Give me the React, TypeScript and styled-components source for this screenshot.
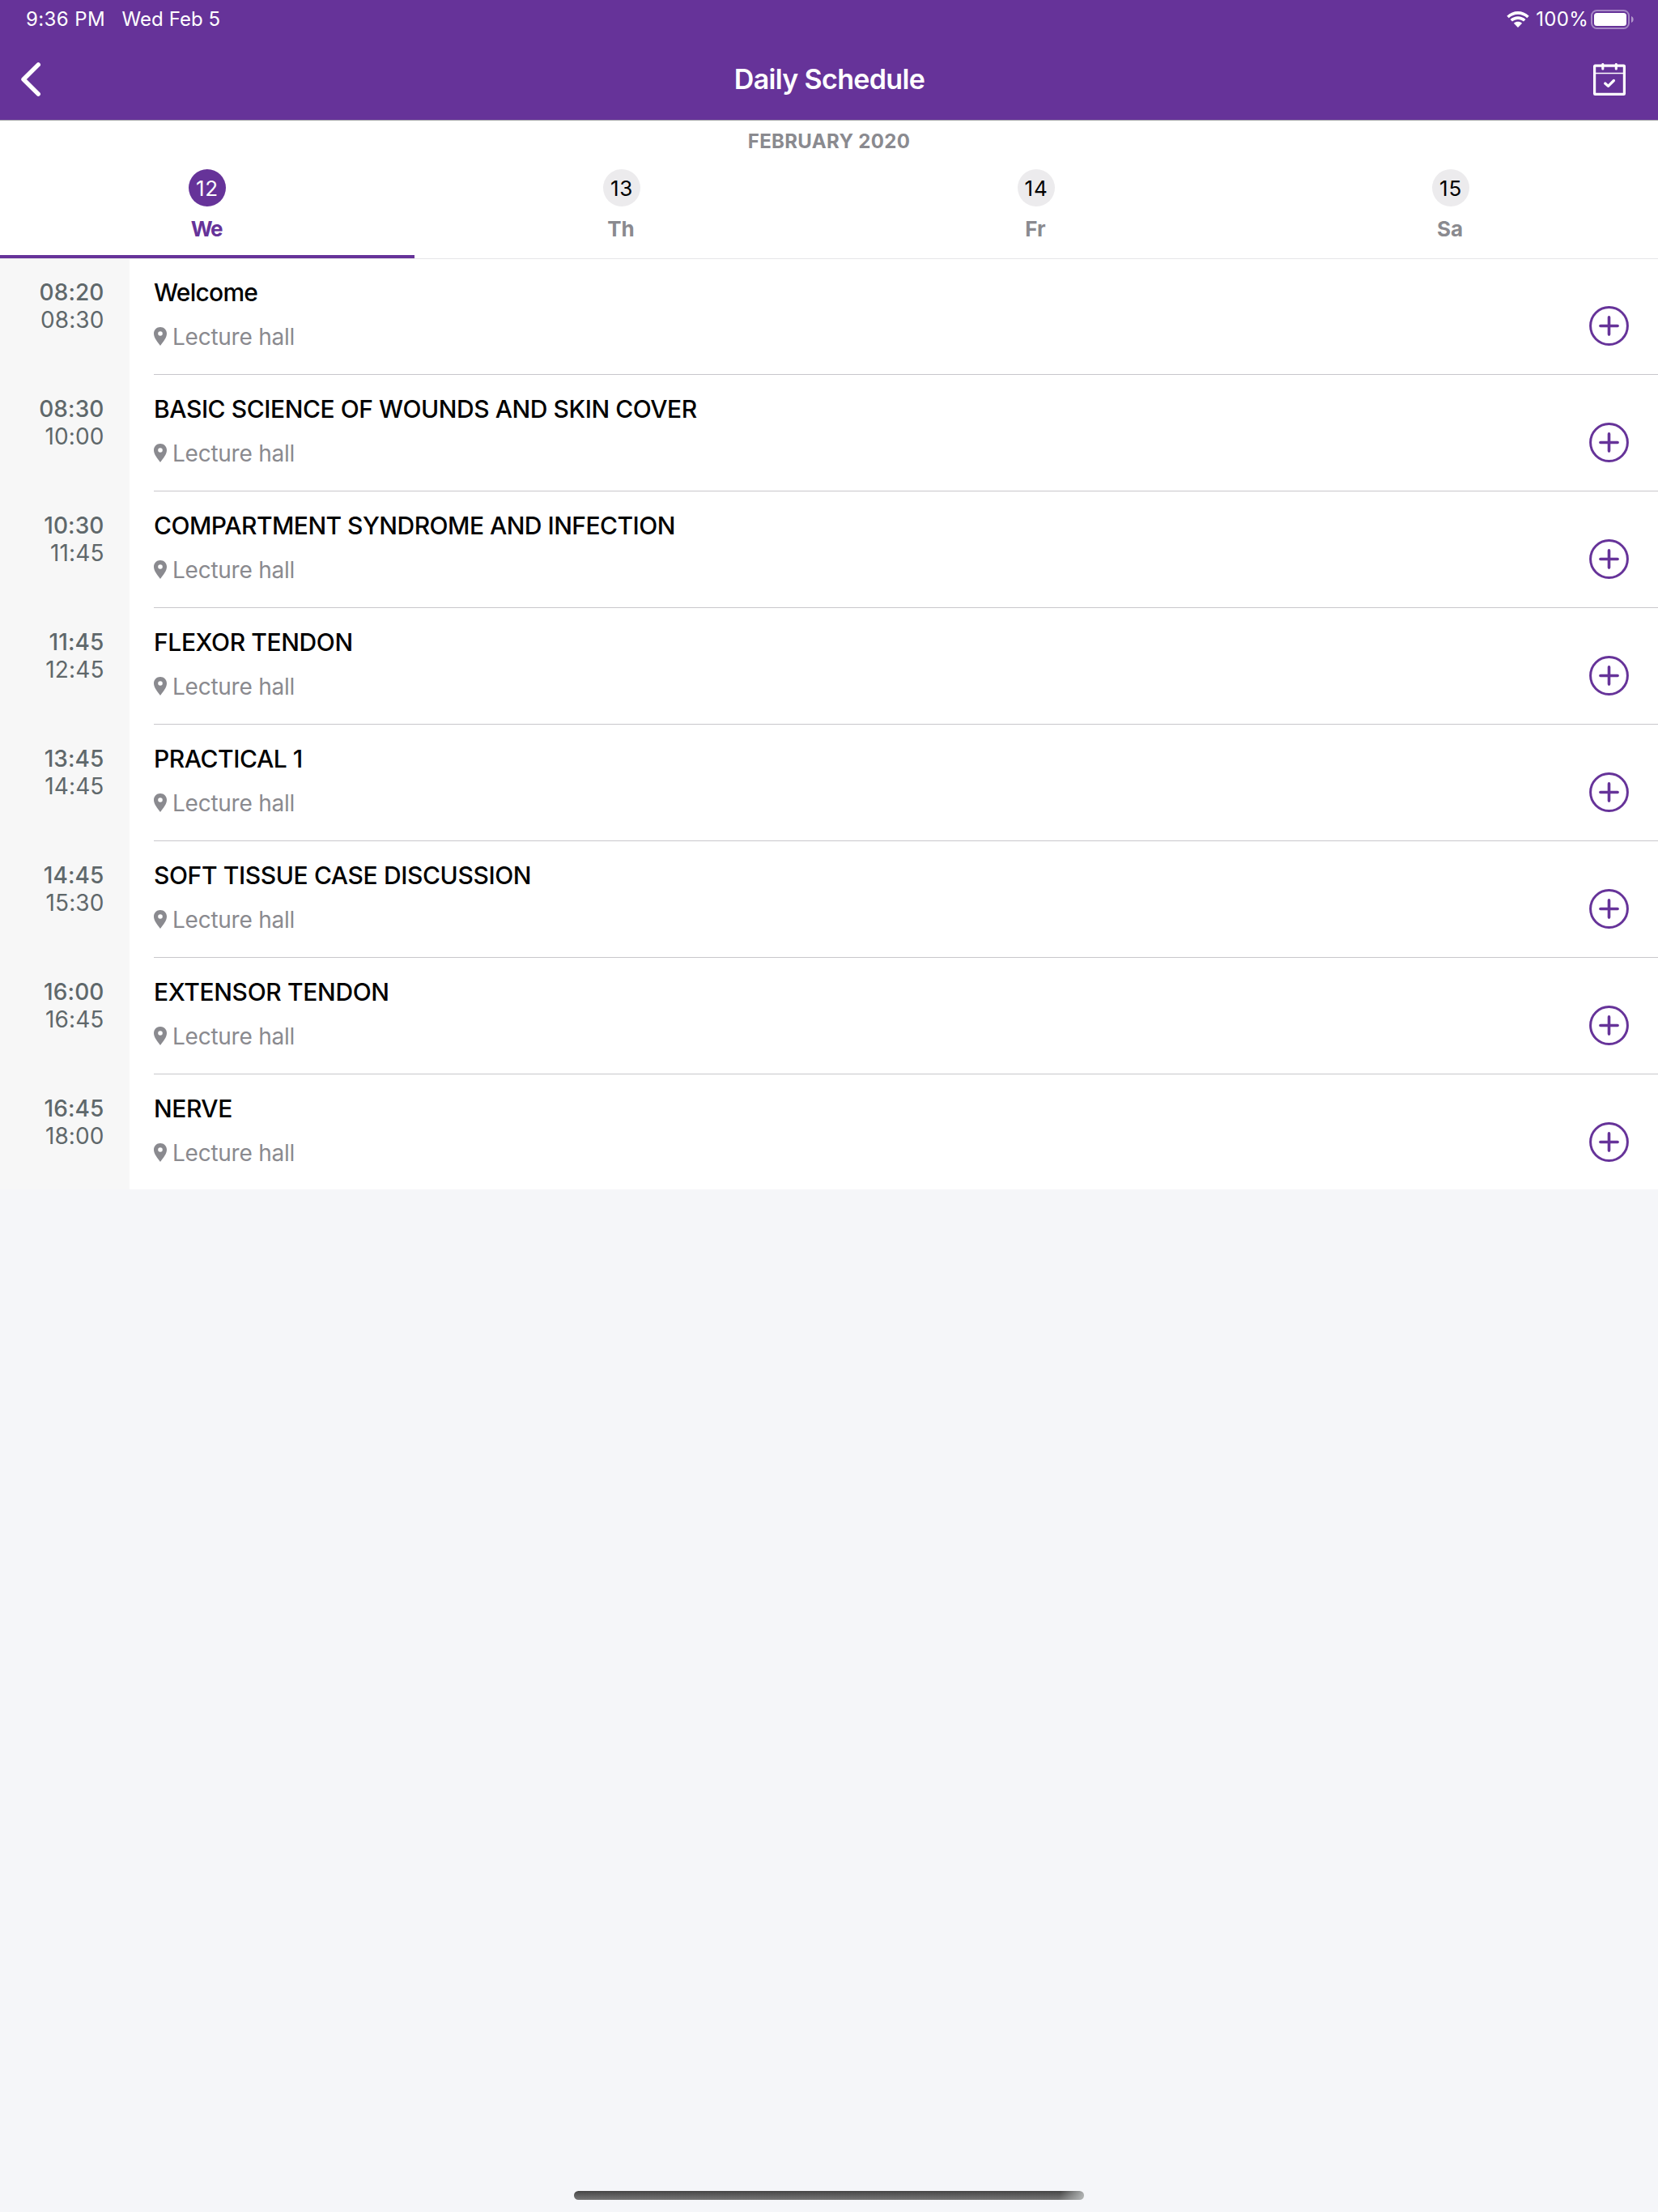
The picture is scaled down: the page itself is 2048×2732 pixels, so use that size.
import React, { useState } from "react";
import styled, { createGlobalStyle } from "styled-components";

const purple = "#663399";
const grey = "#8a8a8f";
const backdrop = "#f5f6f9";

const GlobalStyle = createGlobalStyle`
  *, *::before, *::after { box-sizing: border-box; }
  body { margin: 0; background: ${backdrop}; }
  button { border: 0; padding: 0; background: none; font: inherit; color: inherit; cursor: pointer; }
  svg { display: block; flex: none; }
`;

const Page = styled.div`
  display: flex;
  flex-direction: column;
  width: 2048px;
  height: 2732px;
  background: ${backdrop};
  font-family: Inter, "Liberation Sans", sans-serif;
`;

const TopBar = styled.header`
  flex: none;
  height: 149px;
  background: ${purple};
  border-bottom: 1px solid #a7a7aa;
  color: #fff;
`;

const StatusBar = styled.div`
  display: flex;
  justify-content: space-between;
  height: 48px;
  padding: 0 30px 0 32px;
  font-size: 24px;
  line-height: 48px;
`;

const StatusGroup = styled.div<{ $gap: number }>`
  display: flex;
  gap: ${(p) => p.$gap}px;
`;

const StatusText = styled.span<{ $tracking?: number }>`
  font-weight: 400;
  letter-spacing: ${(p) => p.$tracking ?? 0}px;
`;

const StatusIcon = styled.span<{ $top: number }>`
  padding-top: ${(p) => p.$top}px;
`;

const NavBar = styled.nav`
  display: grid;
  grid-template-columns: 1fr auto 1fr;
  align-items: center;
  height: 100px;
  padding: 0 40px 0 25px;
`;

const NavTitle = styled.h1`
  margin: 0 0 0 16px;
  font-size: 34px;
  font-weight: 600;
  line-height: 42px;
  letter-spacing: -0.65px;
`;

const BackButton = styled.button`
  justify-self: start;
`;

const CalendarButton = styled.button`
  justify-self: end;
`;

const DatePicker = styled.section`
  flex: none;
  height: 171px;
  background: #fff;
  border-bottom: 1px solid #e6e6e8;
`;

const Month = styled.h2`
  height: 50px;
  margin: 0;
  color: ${grey};
  font-size: 24px;
  font-weight: 700;
  line-height: 52px;
  letter-spacing: 0.33px;
  text-align: center;
`;

const Tabs = styled.div`
  display: grid;
  grid-template-columns: repeat(4, 1fr);
`;

const DayTab = styled.button<{ $active: boolean }>`
  display: flex;
  flex-direction: column;
  align-items: center;
  gap: 11px;
  height: 120px;
  padding-top: 10px;
  border-bottom: 4px solid ${(p) => (p.$active ? purple : "transparent")};
  color: ${(p) => (p.$active ? purple : grey)};
  font-size: 26px;
`;

const DayNumber = styled.span<{ $active: boolean }>`
  width: 46px;
  height: 46px;
  border-radius: 50%;
  background: ${(p) => (p.$active ? purple : "#ecebed")};
  color: ${(p) => (p.$active ? "#fff" : "#000")};
  line-height: 48px;
  letter-spacing: 0.8px;
  text-align: center;
`;

const DayName = styled.span<{ $tracking: number }>`
  margin-right: 2px;
  font-weight: 700;
  line-height: 33px;
  letter-spacing: ${(p) => p.$tracking}px;
`;

const List = styled.ul`
  flex: none;
  height: 1149px;
  margin: 0;
  padding: 0;
  overflow: hidden;
  list-style: none;
  background: #fff;
`;

const Row = styled.li`
  display: flex;
  height: 144px;

  &:first-child {
    height: 142px;
  }
`;

const Times = styled.div`
  width: 160px;
  padding: 26px 31.5px 0 0;
  background: #f7f7f7;
  color: #5f686b;
  font-size: 28px;
  line-height: 34px;
  letter-spacing: 0.1px;
  text-align: right;

  ${Row}:first-child & {
    padding-top: 24px;
  }
`;

const Time = styled.div<{ $start?: boolean }>`
  font-weight: ${(p) => (p.$start ? 500 : 400)};
`;

const Body = styled.div`
  display: flex;
  flex: 1;
  justify-content: space-between;
  margin-left: 30px;
  padding: 24px 36px 0 0;
  border-top: 1px solid #c8c7cb;

  ${Row}:first-child & {
    padding-top: 23px;
    border-top: 0;
  }
`;

const Title = styled.h3<{ $tracking: number }>`
  margin: 0 0 20px;
  color: #000;
  font-size: 30px;
  font-weight: 500;
  line-height: 36px;
  letter-spacing: ${(p) => p.$tracking}px;
`;

const Place = styled.div`
  display: flex;
  align-items: center;
  gap: 7px;
  color: ${grey};
  font-size: 28px;
  line-height: 34px;
  letter-spacing: -0.25px;

  svg {
    margin-bottom: 2px;
  }
`;

const AddButton = styled.button`
  align-self: flex-start;
  margin-top: 35px;
  color: ${purple};
`;

const HomeIndicator = styled.div`
  width: 630px;
  height: 11px;
  margin: auto auto 15px;
  border-radius: 6px;
  background:
    linear-gradient(105deg, transparent 95%, rgba(185, 188, 188, 0.85) 99.5%),
    linear-gradient(#454545, #777);
`;

const WifiIcon = () => (
  <svg width="28" height="20" viewBox="0 0 28 20" fill="#fff">
    <path d="M0.3 5.7C8.1-1.9 19.9-1.9 27.7 5.7L25.3 8.2C18.8 2.1 9.2 2.1 2.7 8.2Z" />
    <path d="M4.5 10.1C10 5.1 18 5.1 23.5 10.1L21 12.6C16.9 9 11.1 9 7 12.6Z" />
    <path d="M8.9 14.7C11.9 12.2 16.1 12.2 19.1 14.7L14 20Z" />
  </svg>
);

const BatteryIcon = () => (
  <svg width="53" height="24" viewBox="0 0 53 24">
    <rect x="1" y="1" width="46" height="22" rx="6.5" fill="none" stroke="#fff" strokeOpacity="0.42" strokeWidth="2" />
    <rect x="4" y="4" width="40" height="16" rx="3.5" fill="#fff" />
    <path d="M50 8C53.5 9.2 53.5 14.8 50 16Z" fill="#fff" fillOpacity="0.5" />
  </svg>
);

const BackIcon = () => (
  <svg width="26" height="44" viewBox="0 0 26 44" fill="none" stroke="#fff" strokeWidth="5.4" strokeLinecap="round" strokeLinejoin="round">
    <path d="M22.3 3.9L4 22L22.3 40.1" />
  </svg>
);

const CalendarIcon = () => (
  <svg width="40" height="40" viewBox="0 0 40 40" fill="none" stroke="#fff">
    <rect x="1.6" y="3.2" width="36.8" height="35.2" rx="0.6" strokeWidth="3.2" />
    <path d="M3 12.5H37" strokeWidth="1.6" />
    <path d="M11.8 1.5V7M28.3 1.5V7" strokeWidth="3.1" strokeLinecap="round" />
    <path d="M14.7 25L18.5 28.4L25.4 21.5" strokeWidth="3.2" strokeLinecap="round" strokeLinejoin="round" />
  </svg>
);

const PinIcon = () => (
  <svg width="16" height="23" viewBox="0 0 16 23" fill="currentColor">
    <path
      fillRule="evenodd"
      d="M8 0C3.5 0 0 3.4 0 7.9C0 13.3 4.8 18.2 8 23C11.2 18.2 16 13.3 16 7.9C16 3.4 12.5 0 8 0ZM8 5.2A2.8 2.8 0 1 1 8 10.8A2.8 2.8 0 1 1 8 5.2Z"
    />
  </svg>
);

const PlusIcon = () => (
  <svg width="49" height="49" viewBox="0 0 49 49" fill="none" stroke="currentColor" strokeLinecap="round">
    <circle cx="24.5" cy="24.5" r="22.9" strokeWidth="3" />
    <path d="M24.5 13.9V35.1M13.9 24.5H35.1" strokeWidth="3.6" />
  </svg>
);

const days = [
  { number: 12, name: "We", tracking: -1.4 },
  { number: 13, name: "Th", tracking: 0 },
  { number: 14, name: "Fr", tracking: 0 },
  { number: 15, name: "Sa", tracking: 0 },
];

const sessions = [
  { start: "08:20", end: "08:30", title: "Welcome", tracking: -0.75 },
  { start: "08:30", end: "10:00", title: "BASIC SCIENCE OF WOUNDS AND SKIN COVER" },
  { start: "10:30", end: "11:45", title: "COMPARTMENT SYNDROME AND INFECTION", tracking: -0.52 },
  { start: "11:45", end: "12:45", title: "FLEXOR TENDON", tracking: -0.38 },
  { start: "13:45", end: "14:45", title: "PRACTICAL 1" },
  { start: "14:45", end: "15:30", title: "SOFT TISSUE CASE DISCUSSION", tracking: -0.38 },
  { start: "16:00", end: "16:45", title: "EXTENSOR TENDON", tracking: -0.34 },
  { start: "16:45", end: "18:00", title: "NERVE" },
];

export default function App() {
  const [selected, setSelected] = useState(12);

  return (
    <Page>
      <GlobalStyle />
      <TopBar>
        <StatusBar>
          <StatusGroup $gap={20.5}>
            <StatusText $tracking={0.4}>9:36 PM</StatusText>
            <StatusText $tracking={0.05}>Wed Feb 5</StatusText>
          </StatusGroup>
          <StatusGroup $gap={8}>
            <StatusIcon $top={14}>
              <WifiIcon />
            </StatusIcon>
            <StatusGroup $gap={3}>
              <StatusText $tracking={0.3}>100%</StatusText>
              <StatusIcon $top={12}>
                <BatteryIcon />
              </StatusIcon>
            </StatusGroup>
          </StatusGroup>
        </StatusBar>
        <NavBar>
          <BackButton aria-label="Back">
            <BackIcon />
          </BackButton>
          <NavTitle>Daily Schedule</NavTitle>
          <CalendarButton aria-label="My schedule">
            <CalendarIcon />
          </CalendarButton>
        </NavBar>
      </TopBar>

      <DatePicker>
        <Month>FEBRUARY 2020</Month>
        <Tabs>
          {days.map((day) => {
            const active = day.number === selected;
            return (
              <DayTab key={day.number} $active={active} onClick={() => setSelected(day.number)}>
                <DayNumber $active={active}>{day.number}</DayNumber>
                <DayName $tracking={day.tracking}>{day.name}</DayName>
              </DayTab>
            );
          })}
        </Tabs>
      </DatePicker>

      <List>
        {sessions.map((session) => (
          <Row key={session.start}>
            <Times>
              <Time $start>{session.start}</Time>
              <Time>{session.end}</Time>
            </Times>
            <Body>
              <div>
                <Title $tracking={session.tracking ?? -0.44}>{session.title}</Title>
                <Place>
                  <PinIcon />
                  Lecture hall
                </Place>
              </div>
              <AddButton aria-label="Add to my schedule">
                <PlusIcon />
              </AddButton>
            </Body>
          </Row>
        ))}
      </List>

      <HomeIndicator />
    </Page>
  );
}
